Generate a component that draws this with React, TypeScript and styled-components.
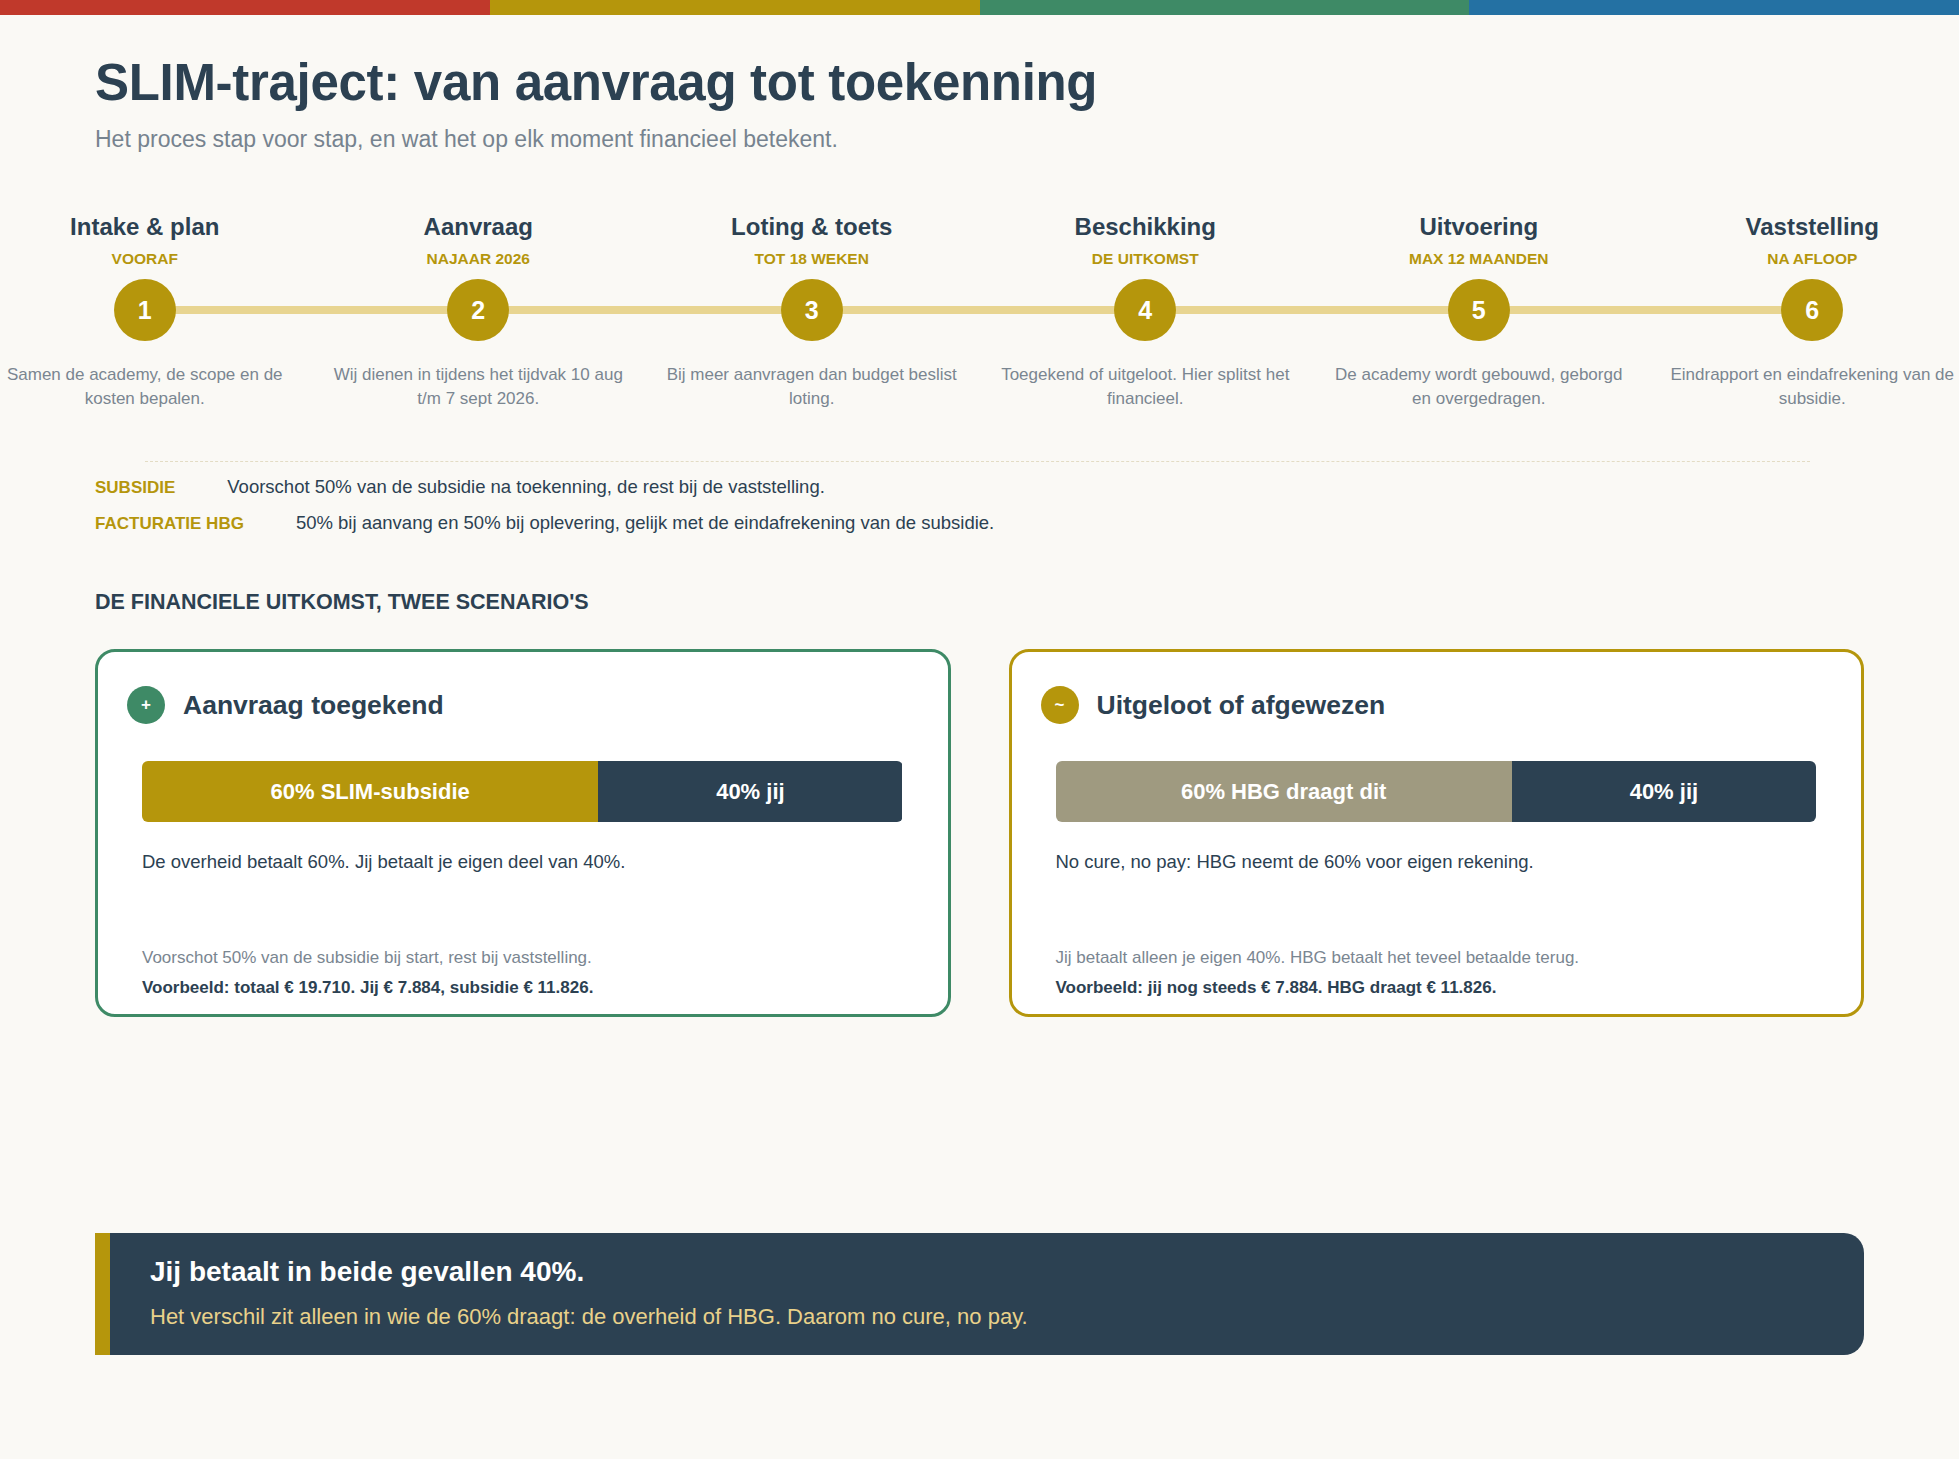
import React from "react";
import styled, { createGlobalStyle } from "styled-components";

const Global = createGlobalStyle`
  html, body { margin: 0; padding: 0; background: #faf9f5; overflow-x: hidden; }
  body { font-family: "Liberation Sans", Arial, sans-serif; color: #2c4152; }
`;

const dark = "#2c4152";
const gold = "#b5960c";
const green = "#3e8a66";

const TopBar = styled.div`display: flex; height: 15px;`;
const TopSeg = styled.div<{ $c: string }>`flex: 1; background: ${p => p.$c};`;

const Page = styled.div`padding: 0 95px 90px;`;
const Title = styled.h1`margin: 38px 0 0; font-size: 51px; font-weight: 700; color: ${dark}; letter-spacing: -0.3px;`;
const Subtitle = styled.p`margin: 14px 0 0; font-size: 23px; color: #76838f;`;

const Steps = styled.div`
  display: flex; width: 2001px; margin: 60px 0 0 -117px; position: relative;
`;
const Step = styled.div`flex: 1; display: flex; flex-direction: column; align-items: center; text-align: center; position: relative;`;
const StepTitle = styled.div`font-size: 24px; font-weight: 700; color: ${dark};`;
const StepWhen = styled.div`margin-top: 9px; font-size: 15.5px; font-weight: 700; color: ${gold}; text-transform: uppercase;`;
const Track = styled.div<{ $first: boolean; $last: boolean }>`
  position: relative; width: 100%; height: 62px; margin-top: 11px; display: flex; justify-content: center;
  &::before {
    content: ""; position: absolute; top: 27px; height: 8px; background: #e8d591;
    left: ${p => (p.$first ? "50%" : "0")}; right: ${p => (p.$last ? "50%" : "0")};
  }
`;
const Dot = styled.div`
  position: relative; width: 62px; height: 62px; border-radius: 50%; background: ${gold};
  color: #fff; font-size: 25px; font-weight: 700; display: flex; align-items: center; justify-content: center;
`;
const StepDesc = styled.div`margin-top: 22px; width: 310px; font-size: 17px; line-height: 24px; color: #7a8691;`;

const Dashed = styled.div`margin: 50px 54px 0 50px; border-top: 1.5px dashed #e3dcc4;`;
const Facts = styled.div`margin-top: 14px; display: flex; flex-direction: column; gap: 14px;`;
const Fact = styled.div`display: flex; align-items: baseline; gap: 52px; font-size: 18.5px; color: ${dark};`;
const FactLabel = styled.span`font-size: 17px; font-weight: 700; color: ${gold};`;

const SectionHead = styled.h2`margin: 56px 0 0; font-size: 21.5px; font-weight: 700; color: ${dark};`;
const Cards = styled.div`margin-top: 34px; display: grid; grid-template-columns: 1fr 1fr; gap: 58px;`;
const Card = styled.div<{ $c: string }>`
  background: #fff; border: 3px solid ${p => p.$c}; border-radius: 20px;
  padding: 34px 45px 16px 44px; height: 368px; box-sizing: border-box; display: flex; flex-direction: column;
`;
const CardHead = styled.div`display: flex; align-items: center; gap: 18px; margin-left: -15px;`;
const Badge = styled.div<{ $c: string }>`
  width: 38px; height: 38px; border-radius: 50%; background: ${p => p.$c}; color: #fff;
  font-size: 17px; font-weight: 700; display: flex; align-items: center; justify-content: center;
`;
const CardTitle = styled.div`font-size: 26.5px; font-weight: 700; color: ${dark};`;
const Bar = styled.div`margin-top: 37px; display: flex; height: 61px; border-radius: 6px; overflow: hidden;`;
const BarSeg = styled.div<{ $c: string; $w: number }>`
  width: ${p => p.$w}%; background: ${p => p.$c}; color: #fff; font-size: 22px; font-weight: 700;
  display: flex; align-items: center; justify-content: center;
`;
const CardText = styled.div`margin-top: 29px; font-size: 18.5px; color: ${dark};`;
const CardNote = styled.div`margin-top: auto; font-size: 17px; color: #7a8691;`;
const CardEx = styled.div`margin-top: 10px; font-size: 17px; font-weight: 700; color: ${dark};`;

const Banner = styled.div`
  margin-top: 216px; background: ${dark}; border-left: 15px solid ${gold}; border-radius: 0 20px 20px 0;
  padding: 23px 40px 25px;
`;
const BannerTitle = styled.div`font-size: 28px; font-weight: 700; color: #fff;`;
const BannerSub = styled.div`margin-top: 16px; font-size: 22px; color: #e9d18a;`;

const steps = [
  ["Intake & plan", "Vooraf", "Samen de academy, de scope en de kosten bepalen."],
  ["Aanvraag", "Najaar 2026", "Wij dienen in tijdens het tijdvak 10 aug t/m 7 sept 2026."],
  ["Loting & toets", "Tot 18 weken", "Bij meer aanvragen dan budget beslist loting."],
  ["Beschikking", "De uitkomst", "Toegekend of uitgeloot. Hier splitst het financieel."],
  ["Uitvoering", "Max 12 maanden", "De academy wordt gebouwd, geborgd en overgedragen."],
  ["Vaststelling", "Na afloop", "Eindrapport en eindafrekening van de subsidie."],
];

export default function App() {
  return (
    <>
      <Global />
      <TopBar>
        {["#c0392b", gold, green, "#2471a3"].map(c => <TopSeg key={c} $c={c} />)}
      </TopBar>
      <Page>
        <Title>SLIM-traject: van aanvraag tot toekenning</Title>
        <Subtitle>Het proces stap voor stap, en wat het op elk moment financieel betekent.</Subtitle>
        <Steps>
          {steps.map(([t, w, d], i) => (
            <Step key={t}>
              <StepTitle>{t}</StepTitle>
              <StepWhen>{w}</StepWhen>
              <Track $first={i === 0} $last={i === steps.length - 1}><Dot>{i + 1}</Dot></Track>
              <StepDesc>{d}</StepDesc>
            </Step>
          ))}
        </Steps>
        <Dashed />
        <Facts>
          <Fact><FactLabel>SUBSIDIE</FactLabel>Voorschot 50% van de subsidie na toekenning, de rest bij de vaststelling.</Fact>
          <Fact><FactLabel>FACTURATIE HBG</FactLabel>50% bij aanvang en 50% bij oplevering, gelijk met de eindafrekening van de subsidie.</Fact>
        </Facts>
        <SectionHead>DE FINANCIELE UITKOMST, TWEE SCENARIO'S</SectionHead>
        <Cards>
          <Card $c={green}>
            <CardHead><Badge $c={green}>+</Badge><CardTitle>Aanvraag toegekend</CardTitle></CardHead>
            <Bar><BarSeg $c={gold} $w={60}>60% SLIM-subsidie</BarSeg><BarSeg $c={dark} $w={40}>40% jij</BarSeg></Bar>
            <CardText>De overheid betaalt 60%. Jij betaalt je eigen deel van 40%.</CardText>
            <CardNote>Voorschot 50% van de subsidie bij start, rest bij vaststelling.</CardNote>
            <CardEx>Voorbeeld: totaal € 19.710. Jij € 7.884, subsidie € 11.826.</CardEx>
          </Card>
          <Card $c={gold}>
            <CardHead><Badge $c={gold}>~</Badge><CardTitle>Uitgeloot of afgewezen</CardTitle></CardHead>
            <Bar><BarSeg $c="#9f9a80" $w={60}>60% HBG draagt dit</BarSeg><BarSeg $c={dark} $w={40}>40% jij</BarSeg></Bar>
            <CardText>No cure, no pay: HBG neemt de 60% voor eigen rekening.</CardText>
            <CardNote>Jij betaalt alleen je eigen 40%. HBG betaalt het teveel betaalde terug.</CardNote>
            <CardEx>Voorbeeld: jij nog steeds € 7.884. HBG draagt € 11.826.</CardEx>
          </Card>
        </Cards>
        <Banner>
          <BannerTitle>Jij betaalt in beide gevallen 40%.</BannerTitle>
          <BannerSub>Het verschil zit alleen in wie de 60% draagt: de overheid of HBG. Daarom no cure, no pay.</BannerSub>
        </Banner>
      </Page>
    </>
  );
}
